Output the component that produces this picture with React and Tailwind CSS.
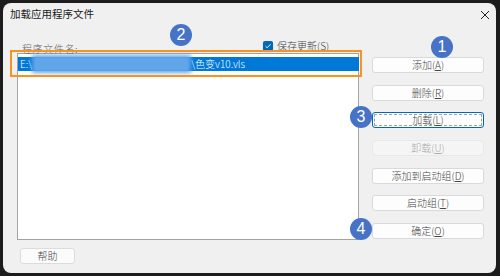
import React from "react";

const F = { fontFamily: '"Noto Sans CJK SC", "Noto Sans", sans-serif' };

function Btn({ children, focus, disabled }) {
  if (disabled) {
    return (
      <div className="h-[16px] w-[112px] rounded-[3px] border border-[#e8e8e8] bg-[#f5f5f5] flex items-center justify-center text-[10px] leading-none text-[#ababab]">
        {children}
      </div>
    );
  }
  if (focus) {
    return (
      <div className="h-[16px] w-[112px] rounded-[3px] border border-[#0067c0] bg-[#fdfdfd] p-[1px]">
        <div className="h-full w-full border border-dashed border-[#a0a0a0] flex items-center justify-center text-[10px] leading-none text-[#444]">
          {children}
        </div>
      </div>
    );
  }
  return (
    <div className="h-[16px] w-[112px] rounded-[3px] border border-[#d9d9d9] bg-[#fdfdfd] flex items-center justify-center text-[10px] leading-none text-[#444]">
      {children}
    </div>
  );
}

function Badge({ n, cls }) {
  return (
    <div
      className={
        "absolute w-[22px] h-[22px] rounded-full bg-[#4673c6] text-white flex items-center justify-center text-[16px] leading-none font-normal " +
        cls
      }
      style={{ fontFamily: '"Liberation Sans", Arial, sans-serif' }}
    >
      {n}
    </div>
  );
}

export default function App() {
  return (
    <div className="w-[500px] h-[276px] bg-[#1c1c1c] pt-[3px] pl-[3px] font-light" style={F}>
      <div className="relative w-[493px] h-[270px] rounded-[8px] bg-[#f0f0f0] overflow-hidden">
        {/* title bar */}
        <div className="h-[22px] flex items-center justify-between pl-[7px] pr-[6px]">
          <span className="text-[10.5px] leading-none text-[#1a1a1a] font-normal">加载应用程序文件</span>
          <svg width="10" height="10" viewBox="0 0 10 10" className="mt-[1px]">
            <path d="M1 1 L9 9 M9 1 L1 9" stroke="#222" strokeWidth="1" fill="none" />
          </svg>
        </div>
        {/* body */}
        <div className="flex pl-[14px]">
          <div className="w-[342px] flex flex-col">
            <div className="h-[28px] flex items-end">
              <div className="w-[246px] pl-[5px] text-[10px] leading-[12px] tracking-[0.6px] text-[#666] translate-y-[2px]">
                程序文件名:
              </div>
              <div className="flex items-center gap-[4px] pb-[2px]">
                <div className="w-[10px] h-[10px] rounded-[2px] bg-[#0067c0] flex items-center justify-center shadow-[0_1px_1px_rgba(0,0,0,0.35)]">
                  <svg width="8" height="8" viewBox="0 0 8 8">
                    <path d="M1.5 4.2 L3.2 5.8 L6.6 2.2" stroke="#fff" strokeWidth="0.9" fill="none" />
                  </svg>
                </div>
                <span className="text-[10px] leading-none text-[#444]">
                  保存更新(S)
                </span>
              </div>
            </div>
            <div className="h-[187px] border border-[#a3a3a3] bg-white pt-[3px]">
              <div className="h-[14px] w-[341px] bg-[#0078d7] flex items-center pl-[2px] text-white text-[10px] leading-none whitespace-nowrap">
                <span>E:\</span>
                <span className="inline-block w-[159px] h-[18px] -my-[2px] bg-[#62a6ea] blur-[2px]"></span>
                <span>\色变v10.vls</span>
              </div>
            </div>
            <div className="pl-[3px] mt-[8px]">
              <div className="h-[16px] w-[55px] rounded-[3px] border border-[#dcdcdc] bg-[#fbfbfb] flex items-center justify-center text-[10px] leading-none text-[#444]">
                帮助
              </div>
            </div>
          </div>
          <div className="ml-[13px] mt-[32px] flex flex-col gap-[11.67px]">
            <Btn>添加(<u>A</u>)</Btn>
            <Btn>删除(<u>R</u>)</Btn>
            <Btn focus>加载(<u>L</u>)</Btn>
            <Btn disabled>卸载(<u>U</u>)</Btn>
            <Btn>添加到启动组(<u>D</u>)</Btn>
            <Btn>启动组(<u>T</u>)</Btn>
            <Btn>确定(<u>O</u>)</Btn>
          </div>
        </div>
        {/* orange highlight */}
        <div className="absolute left-[7px] top-[47px] w-[352px] h-[27px] border-2 border-[#f7931e]"></div>
        <Badge n="1" cls="left-[428px] top-[33px]" />
        <Badge n="2" cls="left-[167px] top-[21px]" />
        <Badge n="3" cls="left-[347px] top-[103px]" />
        <Badge n="4" cls="left-[347px] top-[215px]" />
      </div>
    </div>
  );
}
